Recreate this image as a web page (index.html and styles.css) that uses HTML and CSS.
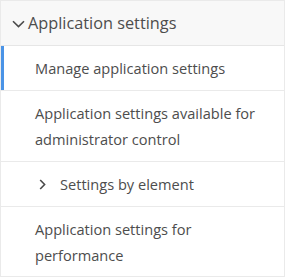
FILE: index.html
```html
<!DOCTYPE html>
<html lang="en">
<head>
  <meta charset="UTF-8">
  <title>Application settings</title>
  <link rel="stylesheet" href="styles.css">
</head>
<body>
  <div class="tree">
    <!-- Section header -->
    <div class="tree-header">
      <svg class="chevron-down" width="13" height="8" viewBox="0 0 13 8">
        <path d="M1 1.2 L6.5 6.6 L12 1.2" fill="none" stroke="#4a4a4a" stroke-width="1.6"/>
      </svg>
      <span>Application settings</span>
    </div>

    <div class="tree-item active">Manage application settings</div>
    <div class="tree-item">Application settings available for administrator control</div>
    <div class="tree-item with-toggle">
      <svg class="chevron-right" width="7" height="11" viewBox="0 0 7 11">
        <path d="M1.2 1 L5.6 5.5 L1.2 10" fill="none" stroke="#4a4a4a" stroke-width="1.6"/>
      </svg>
      <span>Settings by element</span>
    </div>
    <div class="tree-item">Application settings for performance</div>
  </div>
</body>
</html>
```

FILE: styles.css
```css
* { box-sizing: border-box; }
body {
  margin: 0;
  padding: 0;
  background: #fff;
  font-family: 'Open Sans', sans-serif;
  color: #4d4d4d;
}

.tree {
  width: 285px;
  border: 1px solid #eaeaea;
}

.tree-header {
  display: flex;
  align-items: center;
  height: 45px;
  padding-left: 11px;
  background: #f8f8f8;
  border-bottom: 1px solid #e6e6e6;
  font-size: 16.3px;
}

.chevron-down {
  margin-right: 3px;
  margin-top: 1px;
}

.tree-item {
  padding: 9px 20px 9px 34px;
  font-size: 14.6px;
  line-height: 26px;
  border-bottom: 1px solid #eaeaea;
}

.tree-item:last-child {
  border-bottom: none;
  padding-bottom: 8px;
}

.tree-item.active {
  box-shadow: inset 3px 0 0 #4a93e6;
}

.with-toggle {
  display: flex;
  align-items: center;
  padding-left: 38px;
}

.chevron-right {
  margin-right: 14px;
}
```
